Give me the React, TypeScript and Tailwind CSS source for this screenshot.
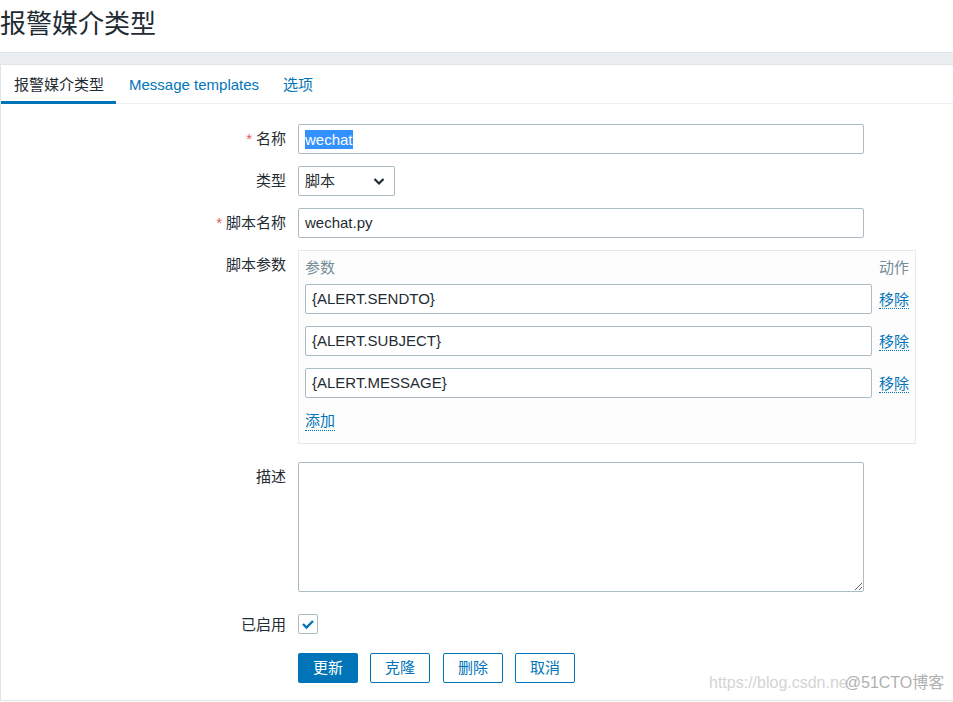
import React from "react";

const FONT = "font-['Liberation_Sans','Noto_Sans_CJK_SC',sans-serif]";

function Label({ text, required }: { text: string; required?: boolean }) {
  return (
    <div className="w-[285px] shrink-0 text-right leading-[30px] text-[15px] text-[#1f2c33]">
      {required && <span className="text-[#e45959] mr-[4px]">*</span>}
      {text}
    </div>
  );
}

function Field({ children, className = "" }: { children: React.ReactNode; className?: string }) {
  return (
    <div
      className={`h-[30px] border border-[#acbbc2] rounded-[2px] bg-white px-[6px] flex items-center text-[15px] text-[#1f2c33] ${className}`}
    >
      {children}
    </div>
  );
}

function RemoveLink() {
  return (
    <span className="text-[#0275b8] text-[15px] leading-[18px] border-b border-dotted border-[#0275b8]">移除</span>
  );
}

export default function App() {
  const params = ["{ALERT.SENDTO}", "{ALERT.SUBJECT}", "{ALERT.MESSAGE}"];
  return (
    <div className={`relative w-[953px] h-[702px] bg-white overflow-hidden ${FONT} text-[#1f2c33]`}>
      <h1 className="h-[52px] text-[26px] leading-[48px] font-normal text-[#1f2c33]">报警媒介类型</h1>
      <div className="h-[13px] bg-[#ebeef0] border-t border-b border-[#dfe4e7]" />
      <div className="h-[636px] border-l border-b border-[#dfe4e7] bg-white">
        {/* tabs */}
        <div className="flex h-[39px] border-b border-[#ebeef0] text-[15px]">
          <div className="relative pl-[13px] pr-[12px] pt-[2px] flex items-center text-[#1f2c33]">
            报警媒介类型
            <div className="absolute left-0 right-0 bottom-[-1px] h-[3px] bg-[#0275b8]" />
          </div>
          <div className="pl-[13px] pr-[12px] pt-[2px] flex items-center text-[#0275b8]">Message templates</div>
          <div className="px-[12px] pt-[2px] flex items-center text-[#0275b8]">选项</div>
        </div>

        {/* form */}
        <div className="pt-[20px]">
          <div className="flex gap-[12px]">
            <Label text="名称" required />
            <Field className="w-[566px] border-[#1a6b9e]">
              <span className="bg-[#3390ff] text-white leading-[19px]">wechat</span>
            </Field>
          </div>

          <div className="flex gap-[12px] mt-[12px]">
            <Label text="类型" />
            <Field className="w-[97px] justify-between">
              <span>脚本</span>
              <svg width="14" height="14" viewBox="0 0 14 14" className="mr-[2px]">
                <polyline points="2.5,5 7,9.5 11.5,5" fill="none" stroke="#1f2c33" strokeWidth="2.2" />
              </svg>
            </Field>
          </div>

          <div className="flex gap-[12px] mt-[12px]">
            <Label text="脚本名称" required />
            <Field className="w-[566px]">wechat.py</Field>
          </div>

          <div className="flex gap-[12px] mt-[12px]">
            <Label text="脚本参数" />
            <div className="w-[618px] h-[194px] border border-[#e6e9eb] bg-[#fdfdfd] pt-[5px] pl-[6px] pr-[6px]">
              <div className="grid grid-cols-[567px_auto] gap-x-[7px] h-[24px] items-center text-[15px] text-[#768d99]">
                <span>参数</span>
                <span>动作</span>
              </div>
              <div className="mt-[4px] flex flex-col gap-[12px]">
                {params.map((p) => (
                  <div key={p} className="grid grid-cols-[567px_auto] gap-x-[7px] items-center">
                    <Field>{p}</Field>
                    <div className="pt-[2px]">
                      <RemoveLink />
                    </div>
                  </div>
                ))}
              </div>
              <div className="h-[30px] mt-[8px] flex items-center">
                <span className="text-[#0275b8] text-[15px] leading-[18px] border-b border-dotted border-[#0275b8]">添加</span>
              </div>
            </div>
          </div>

          <div className="flex gap-[12px] mt-[18px]">
            <Label text="描述" />
            <textarea
              className="w-[566px] h-[130px] border border-[#acbbc2] rounded-[2px] bg-white outline-none"
              defaultValue=""
            />
          </div>

          <div className="flex gap-[12px] mt-[20px] h-[24px] items-center">
            <div className="relative top-[1px] w-[285px] shrink-0 text-right leading-[24px] text-[15px]">已启用</div>
            <div className="w-[20px] h-[20px] border border-[#acbbc2] rounded-[2px] flex items-center justify-center">
              <svg width="16" height="16" viewBox="0 0 16 16">
                <polyline points="3,8 6.5,11.5 13,5" fill="none" stroke="#0275b8" strokeWidth="2.4" />
              </svg>
            </div>
          </div>

          <div className="flex mt-[17px] pl-[297px] gap-[12px] text-[15px]">
            <button className="w-[60px] h-[30px] rounded-[2px] bg-[#0275b8] text-white">更新</button>
            <button className="w-[60px] h-[30px] rounded-[2px] border border-[#0275b8] text-[#0275b8] bg-white">克隆</button>
            <button className="w-[60px] h-[30px] ml-[1px] rounded-[2px] border border-[#0275b8] text-[#0275b8] bg-white">删除</button>
            <button className="w-[60px] h-[30px] rounded-[2px] border border-[#0275b8] text-[#0275b8] bg-white">取消</button>
          </div>
        </div>
      </div>

      <div className="absolute left-[709px] top-[671px] text-[16px] leading-[24px] whitespace-nowrap">
        <span className="text-[#d4d4d4]">https://blog.csdn.ne</span>
        <span className="text-[#b0b0b0] ml-[-3px]">@51CTO博客</span>
      </div>
    </div>
  );
}
